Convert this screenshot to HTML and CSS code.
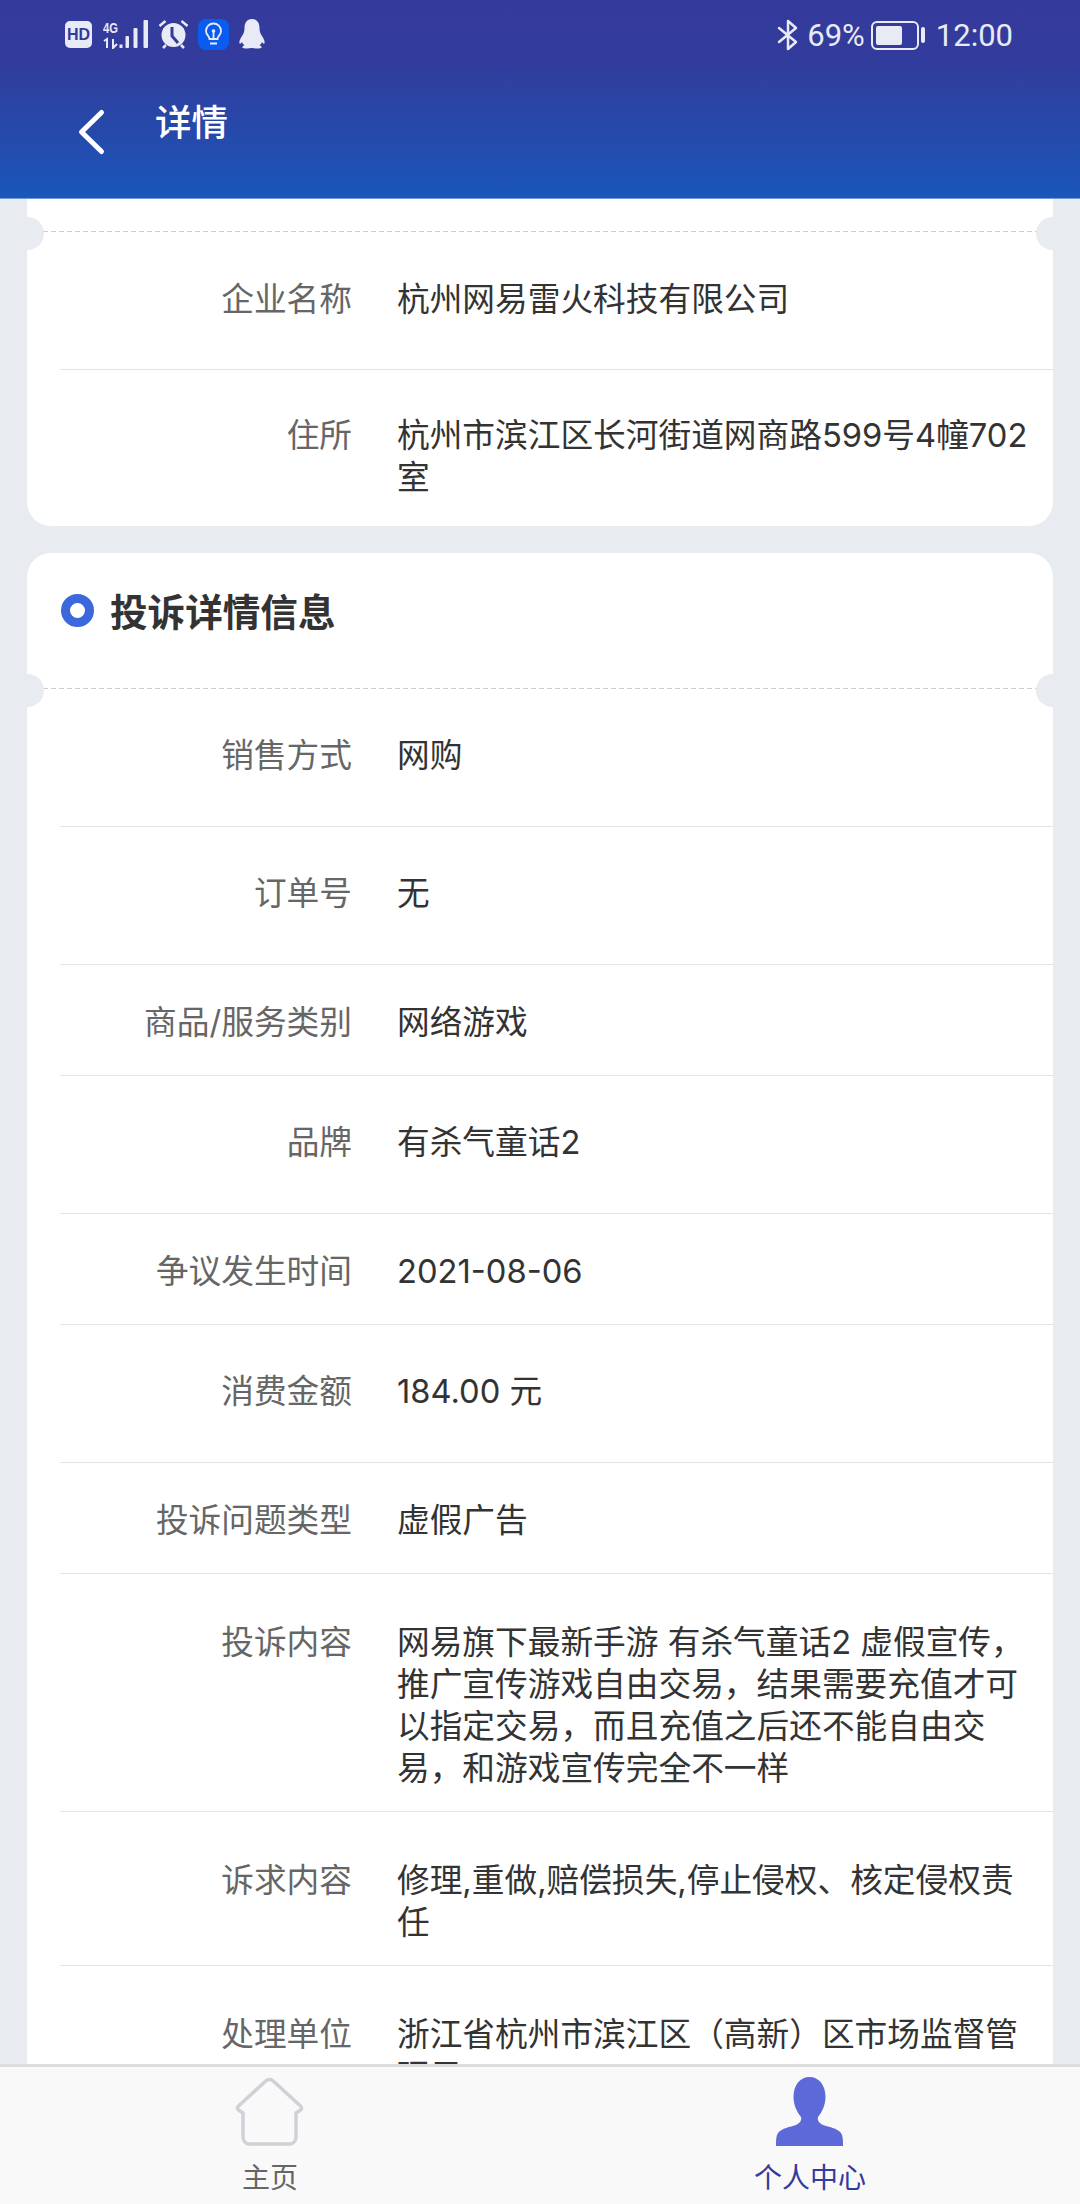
FILE: index.html
```html
<!DOCTYPE html>
<html lang="zh-CN">
<head>
    <meta charset="UTF-8">
    <meta name="viewport" content="width=device-width, initial-scale=1.0">
    <title>详情</title>
    <link rel="stylesheet" href="styles.css">
</head>
<body>
    <header class="app-header">
        <div class="status-bar">
            <div class="status-left">
                <span class="hd-badge">HD</span>
                <svg class="icon-signal" width="46" height="30" viewBox="0 0 46 30">
                    <text x="0" y="14" class="net-text" textLength="15" lengthAdjust="spacingAndGlyphs">4G</text>
                    <path d="M1 22l3-2v9M10 20v9l4-4" fill="none" stroke="#e8eaf6" stroke-width="2"/>
                    <rect x="16.500" y="25.500" width="3" height="3.500" fill="#e8eaf6"/>
                    <rect x="22.500" y="17" width="3.500" height="12" rx="1" fill="#e8eaf6"/>
                    <rect x="30.500" y="9" width="4" height="20" rx="1" fill="#e8eaf6"/>
                    <rect x="40.500" y="1" width="4.500" height="28" rx="1" fill="#e8eaf6"/>
                </svg>
                <svg class="icon-alarm" width="31" height="30" viewBox="0 0 31 30">
                    <circle cx="15.500" cy="16" r="12" fill="#e8eaf6"/>
                    <path d="M14 8v9l6 7" fill="none" stroke="#333b9c" stroke-width="3"/>
                    <path d="M1.500 7l6-5M29.500 7l-6-5M5 29l3-3M26 29l-3-3" fill="none" stroke="#e8eaf6" stroke-width="2.500"/>
                </svg>
                <svg class="icon-bulb" width="31" height="31" viewBox="0 0 31 31">
                    <rect width="31" height="31" rx="8" fill="#0a5cf0"/>
                    <path d="M11.500 20c0-3-3.500-4-3.500-8a7.500 7.500 0 0 1 15 0c0 4-3.500 5-3.500 8z" fill="none" stroke="#e8eaf6" stroke-width="1.800"/>
                    <path d="M12 24.500h7M15.500 20v-8" fill="none" stroke="#e8eaf6" stroke-width="1.800"/>
                    <circle cx="15.500" cy="12" r="1.800" fill="#e8eaf6"/>
                </svg>
                <svg class="icon-qq" width="26" height="30" viewBox="0 0 26 30">
                    <path d="M13 0c5.500 0 7.500 4.500 7.500 9 0 3 .5 5 2.500 8 2 3 3.300 6.500 2.300 7.500-.8.500-1.800-.5-2.300-1.500-.5 1.500-1.500 2.500-2.500 3.500 1.500.5 2.500 1.300 2 2.300-1 .9-6 .9-9.500.2-3.500.7-8.500.7-9.500-.2-.5-1 .5-1.800 2-2.300-1-1-2-2-2.500-3.500-.5 1-1.500 2-2.300 1.500-1-1 .3-4.500 2.300-7.500 2-3 2.500-5 2.500-8C5.500 4.500 7.500 0 13 0z" fill="#e8eaf6"/>
                </svg>
            </div>
            <div class="status-right">
                <svg class="icon-bluetooth" width="22" height="32" viewBox="0 0 22 32">
                    <path d="M2 9l17 14-8 7V2l8 7L2 23" fill="none" stroke="#e8eaf6" stroke-width="2.500" stroke-linejoin="round" stroke-linecap="round"/>
                </svg>
                <span class="battery-pct">69%</span>
                <span class="battery">
                    <span class="battery-level"></span>
                </span>
                <span class="battery-cap"></span>
                <span class="clock">12:00</span>
            </div>
        </div>
        <div class="title-bar">
            <svg class="icon-back" width="30" height="48" viewBox="0 0 30 48">
                <path d="M24.500 4.500L4.500 24l20 19.500" fill="none" stroke="#fff" stroke-width="5" stroke-linecap="round" stroke-linejoin="round"/>
            </svg>
            <h1 class="page-title">详情</h1>
        </div>
    </header>

    <main class="content">
        <section class="card card-first">
            <div class="card-head card-head-cut">
                <span class="notch notch-left"></span>
                <span class="notch notch-right"></span>
            </div>
            <div class="info-row row-top">
                <div class="info-label">企业名称</div>
                <div class="info-value">杭州网易雷火科技有限公司</div>
            </div>
            <div class="info-row row-last">
                <div class="info-label">住所</div>
                <div class="info-value">杭州市滨江区长河街道网商路599号4幢702室</div>
            </div>
        </section>

        <section class="card">
            <div class="card-head">
                <span class="title-dot"></span>
                <h2 class="card-title">投诉详情信息</h2>
                <span class="notch notch-left"></span>
                <span class="notch notch-right"></span>
            </div>
            <div class="info-row row-a">
                <div class="info-label">销售方式</div>
                <div class="info-value">网购</div>
            </div>
            <div class="info-row row-a">
                <div class="info-label">订单号</div>
                <div class="info-value">无</div>
            </div>
            <div class="info-row row-b">
                <div class="info-label">商品/服务类别</div>
                <div class="info-value">网络游戏</div>
            </div>
            <div class="info-row row-a">
                <div class="info-label">品牌</div>
                <div class="info-value">有杀气童话2</div>
            </div>
            <div class="info-row row-b">
                <div class="info-label">争议发生时间</div>
                <div class="info-value">2021-08-06</div>
            </div>
            <div class="info-row row-a">
                <div class="info-label">消费金额</div>
                <div class="info-value">184.00 元</div>
            </div>
            <div class="info-row row-b">
                <div class="info-label">投诉问题类型</div>
                <div class="info-value">虚假广告</div>
            </div>
            <div class="info-row row-multi">
                <div class="info-label">投诉内容</div>
                <div class="info-value">网易旗下最新手游 有杀气童话2 虚假宣传，推广宣传游戏自由交易，结果需要充值才可以指定交易，而且充值之后还不能自由交易，和游戏宣传完全不一样</div>
            </div>
            <div class="info-row row-multi">
                <div class="info-label">诉求内容</div>
                <div class="info-value">修理,重做,赔偿损失,停止侵权、核定侵权责任</div>
            </div>
            <div class="info-row row-multi">
                <div class="info-label">处理单位</div>
                <div class="info-value">浙江省杭州市滨江区（高新）区市场监督管理局</div>
            </div>
        </section>
    </main>

    <nav class="tab-bar">
        <a class="tab-item" href="#">
            <svg class="tab-icon" width="70" height="70" viewBox="0 0 70 70">
                <path d="M34.500 2.500c-1.500 0-3 .7-4 1.700L3.500 29c-1.500 1.500-1.500 3 0 4l4.500 3v24c0 4 3 7 7 7h39c4 0 7-3 7-7V36l4.500-3c1.500-1 1.500-2.500 0-4L38.500 4.200c-1-1-2.500-1.700-4-1.700z" fill="none" stroke="#d0d1d6" stroke-width="3.500" stroke-linejoin="round"/>
            </svg>
            <span class="tab-label">主页</span>
        </a>
        <a class="tab-item tab-active" href="#">
            <svg class="tab-icon" width="70" height="70" viewBox="0 0 70 70">
                <path d="M34.500 0C44 0 50.500 8 50.500 20c0 8-3.500 15-7.500 20-1 3 1 6 5 8 6 2 14 3 18 8 2 3 2 7 2 13H1c0-6 0-10 2-13 4-5 12-6 18-8 4-2 6-5 5-8-4-5-7.500-12-7.500-20C18.500 8 25 0 34.500 0z" fill="#5d69d8"/>
            </svg>
            <span class="tab-label">个人中心</span>
        </a>
    </nav>
</body>
</html>
```

FILE: styles.css
```css
:root {
    --page-bg: #e8ebf0;
    --line: #e4e4e4;
    --label: #666;
    --value: #333;
    --status: #e8eaf6;
}

body {
    margin: 0;
    height: 2204px;
    overflow: hidden;
    display: flex;
    flex-direction: column;
    background-color: var(--page-bg);
    font-family: Inter, "Noto Sans CJK SC", sans-serif;
    color: var(--value);
}

/* header */
.app-header {
    height: 199px;
    flex-shrink: 0;
    background: linear-gradient(180deg, #343a9b 0%, #323c9c 30%, #1a56b9 100%);
    border-bottom: 1px solid #6f9ae0;
    box-sizing: border-box;
    position: relative;
    z-index: 2;
}

.status-bar {
    height: 48px;
    box-sizing: border-box;
    padding: 22px 67px 0 65px;
    display: flex;
    justify-content: space-between;
    align-items: center;
    color: var(--status);
}

.status-left,
.status-right {
    display: flex;
    align-items: center;
}

.status-left {
    margin-top: -2px;
}

.icon-signal {
    margin-left: 11px;
}

.icon-alarm,
.icon-bulb {
    margin-left: 9px;
}

.icon-qq {
    margin-left: 10px;
}

.hd-badge {
    width: 27px;
    height: 27px;
    border-radius: 5px;
    background-color: var(--status);
    color: #343a9b;
    font-family: "Liberation Sans", sans-serif;
    font-size: 16px;
    font-weight: bold;
    line-height: 27px;
    text-align: center;
}

.net-text {
    font-family: "Liberation Sans", sans-serif;
    font-size: 15px;
    font-weight: bold;
    fill: var(--status);
}

.battery-pct,
.clock {
    font-family: Roboto, sans-serif;
    font-size: 31px;
}

.battery-pct {
    margin-left: 8px;
}

.battery {
    margin-left: 6px;
    width: 48px;
    height: 29px;
    border: 2px solid var(--status);
    border-radius: 6px;
    box-sizing: border-box;
    padding: 3px;
}

.battery-level {
    display: block;
    width: 26px;
    height: 100%;
    background-color: var(--status);
    border-radius: 2px;
}

.battery-cap {
    width: 4px;
    height: 16px;
    margin-left: 2px;
    background-color: var(--status);
    border-radius: 2px;
}

.clock {
    margin-left: 11px;
}

.title-bar {
    padding: 60px 0 0 77px;
    display: flex;
    align-items: flex-start;
}

.page-title {
    margin: -10px 0 0 48px;
    font-size: 36.5px;
    font-weight: 500;
    line-height: 50px;
    color: #fff;
}

/* cards */
.content {
    flex-grow: 1;
    padding: 0 27px;
    min-height: 0;
    overflow: hidden;
}

.card {
    background-color: #fff;
    border-radius: 24px;
    margin-bottom: 27px;
}

.card-first {
    border-radius: 0 0 24px 24px;
}

.card-head {
    height: 136px;
    box-sizing: border-box;
    padding: 0 0 21px 34px;
    display: flex;
    align-items: center;
    position: relative;
    background: repeating-linear-gradient(90deg, #ccc 0 5px, transparent 5px 8px) left bottom / 100% 1px no-repeat;
}

.card-head-cut {
    height: 33px;
    padding: 0;
}

.notch {
    position: absolute;
    bottom: -18px;
    width: 33px;
    height: 33px;
    border-radius: 50%;
    background-color: var(--page-bg);
}

.notch-left {
    left: -16px;
}

.notch-right {
    right: -16px;
}

.title-dot {
    width: 33px;
    height: 33px;
    border: 9.5px solid #3b69dc;
    border-radius: 50%;
    box-sizing: border-box;
}

.card-title {
    margin: 5px 0 0 16px;
    font-size: 37.6px;
    font-weight: bold;
    line-height: 50px;
}

.info-row {
    margin-left: 33px;
    box-sizing: border-box;
    border-bottom: 1px solid var(--line);
    display: flex;
    font-size: 32.7px;
    line-height: 42px;
}

.row-top {
    height: 138px;
    padding-top: 46px;
}

.row-a {
    height: 138px;
    padding-top: 45px;
}

.row-b {
    height: 111px;
    padding-top: 36px;
}

.row-last {
    border-bottom: none;
    padding: 44px 0 28px;
}

.row-multi {
    padding: 47px 0 22px;
}

.info-label {
    width: 292px;
    flex-shrink: 0;
    text-align: right;
    color: var(--label);
}

.info-value {
    margin-left: 45px;
    padding-right: 24px;
    min-width: 0;
}

/* bottom tabs */
.tab-bar {
    height: 140px;
    flex-shrink: 0;
    box-sizing: border-box;
    background-color: #f9f9f9;
    border-top: 3px solid #ddd;
    display: flex;
    position: relative;
    z-index: 2;
}

.tab-item {
    flex: 1;
    padding-top: 10px;
    display: flex;
    flex-direction: column;
    align-items: center;
    text-decoration: none;
    color: #666;
}

.tab-label {
    margin-top: 11px;
    font-size: 28px;
    line-height: 40px;
}

.tab-active {
    color: #333b9c;
}
```
